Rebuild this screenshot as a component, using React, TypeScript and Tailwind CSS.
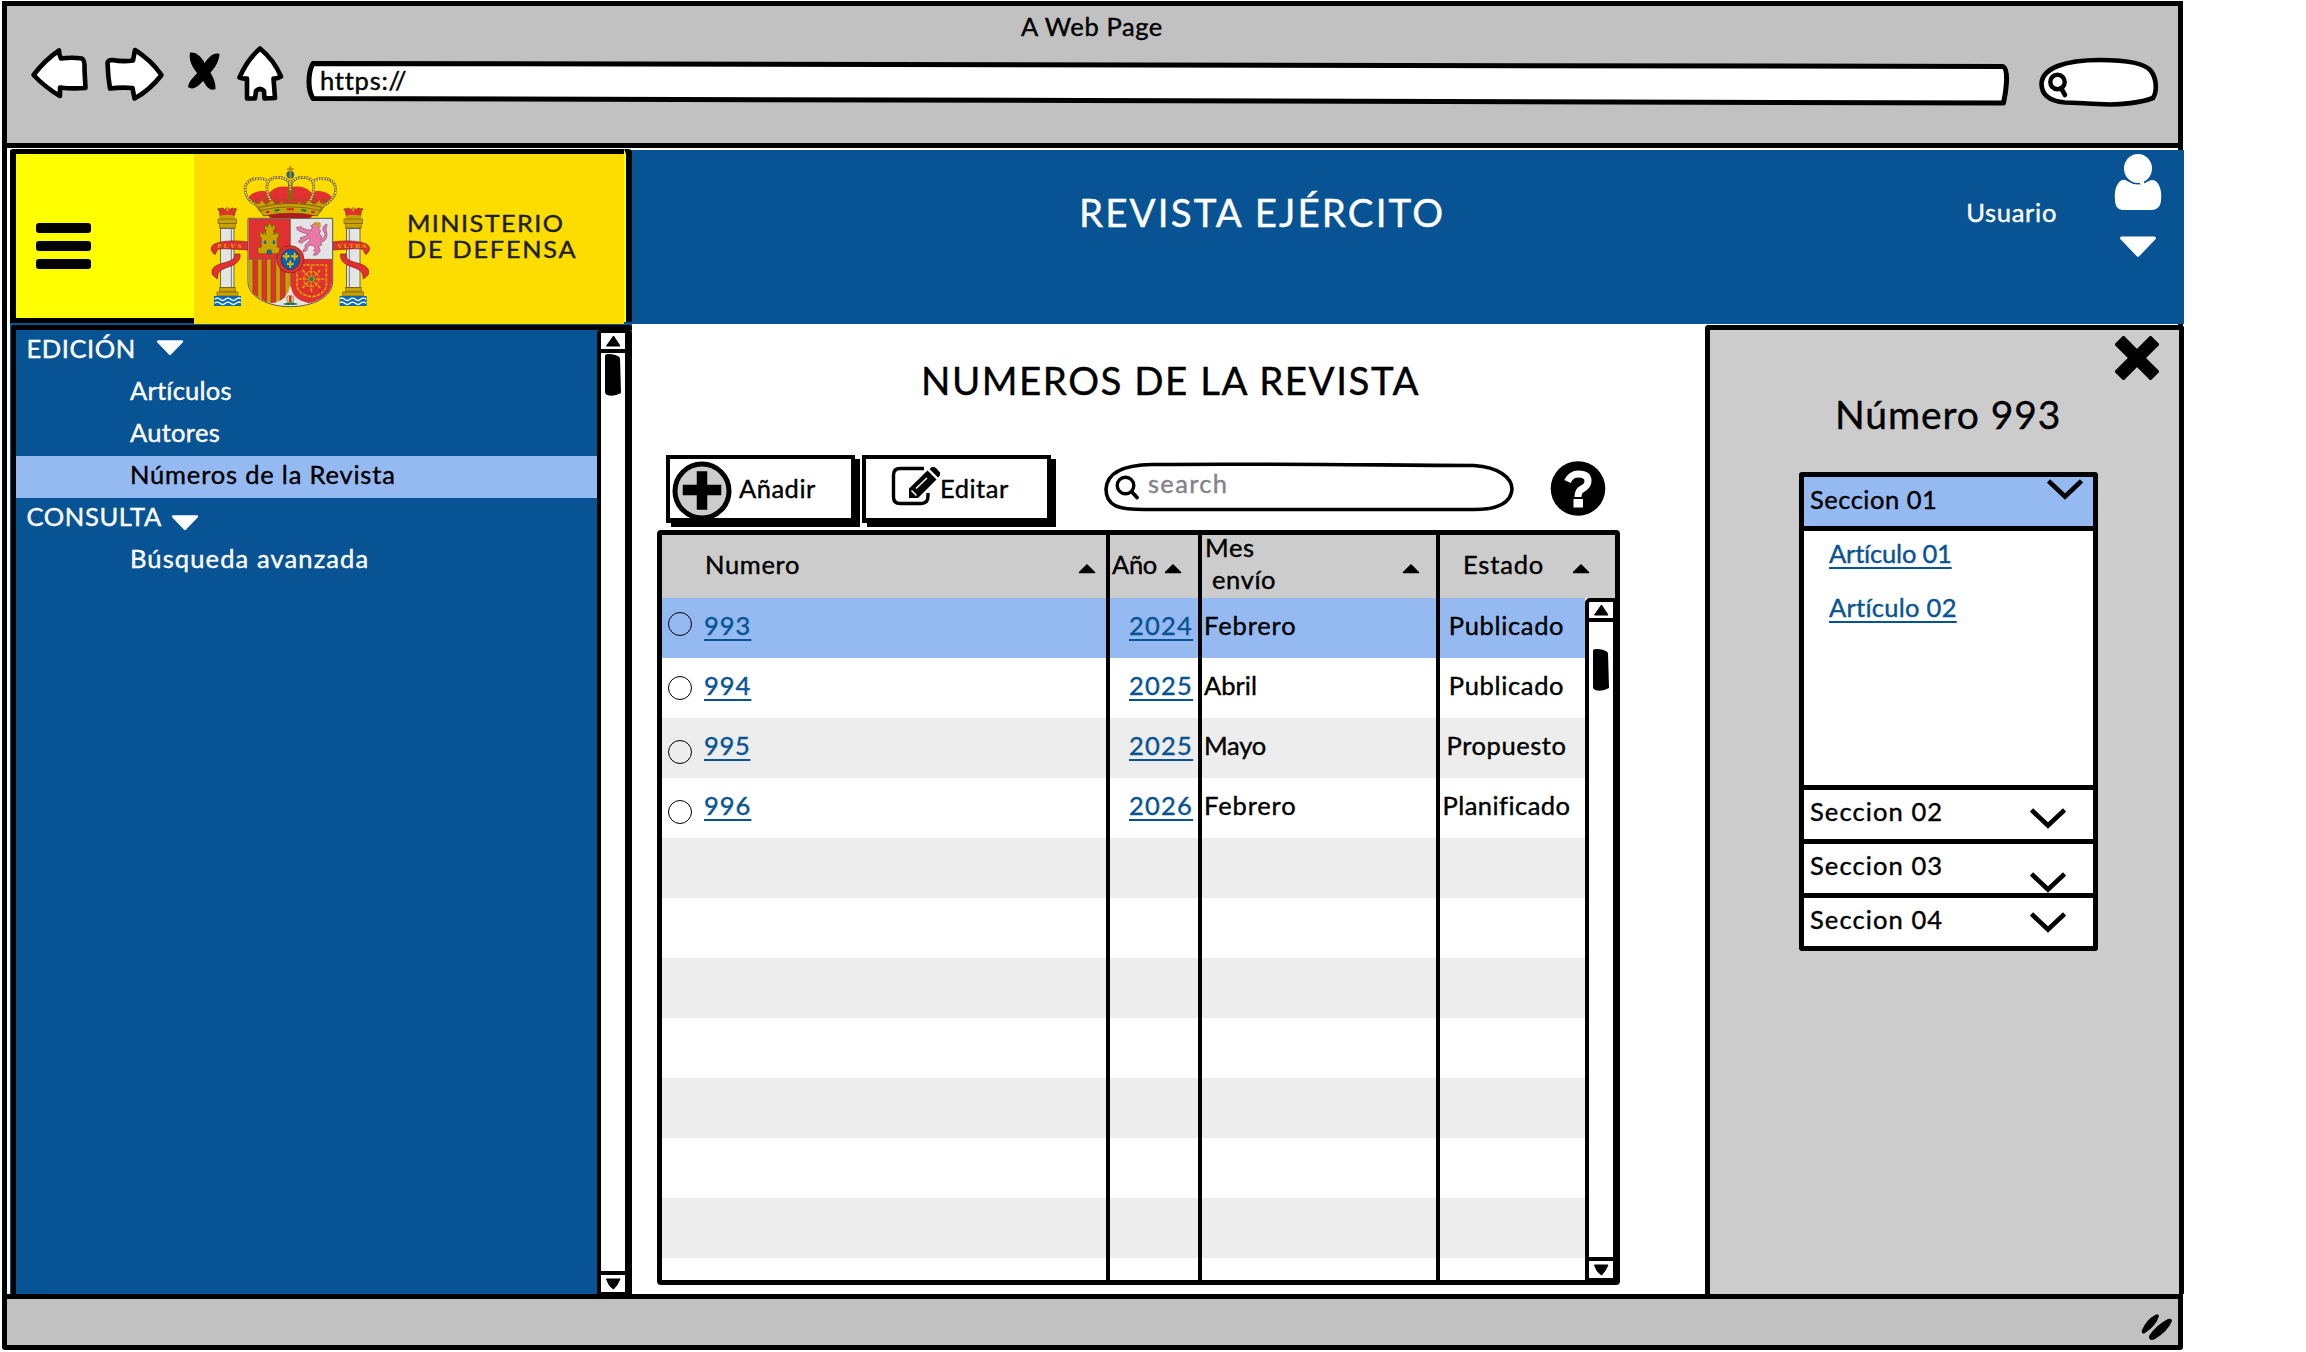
import { useLayoutEffect, useRef, useState } from "react";
import type { ReactNode } from "react";

/** Text run whose tracking is computed so that it spans a given width. */
function Txt({ w, className = "", children }: { w: number; className?: string; children: string }) {
  const ref = useRef<HTMLSpanElement>(null);
  const [tracking, setTracking] = useState<number | null>(null);
  useLayoutEffect(() => {
    if (ref.current && tracking === null) {
      setTracking((w - ref.current.offsetWidth) / children.length);
    }
  }, [w, children, tracking]);
  return (
    <span
      ref={ref}
      className={`inline-block shrink-0 self-start whitespace-pre ${className}`}
      style={tracking === null ? undefined : { letterSpacing: `${tracking}px` }}
    >
      {children}
    </span>
  );
}

const link = "text-[#085394] underline decoration-2 underline-offset-[4px]";

function Icon({ w, h, box, className = "", children }: { w: number; h: number; box: string; className?: string; children: ReactNode }) {
  return (
    <svg width={w} height={h} viewBox={box} className={`block shrink-0 ${className}`} fill="none">
      {children}
    </svg>
  );
}

function CaretDown({ w = 28, h = 16, className = "" }: { w?: number; h?: number; className?: string }) {
  return (
    <Icon w={w} h={h} box="0 0 28 16" className={className}>
      <path d="M2 1.5H26L14 14Z" fill="white" stroke="white" strokeWidth="2.4" strokeLinejoin="round" />
    </Icon>
  );
}

function SortUp({ className = "" }: { className?: string }) {
  return (
    <Icon w={18} h={11} box="0 0 18 11" className={className}>
      <path d="M1.5 9.5L9 2L16.5 9.5Z" fill="black" stroke="black" strokeWidth="1.6" strokeLinejoin="round" />
    </Icon>
  );
}

function Chevron({ className }: { className: string }) {
  return (
    <Icon w={36} h={21} box="0 0 36 21" className={className}>
      <path d="M1.5 2L18 17.5L34.5 2" stroke="black" strokeWidth="4.6" />
    </Icon>
  );
}

function NavIcons() {
  return (
    <Icon w={254} h={56} box="30 46 254 56" className="ml-[23px] mt-10">
      <g fill="white" stroke="black" strokeWidth="4.6" strokeLinejoin="round">
        <path d="M33.5 75Q45 60 59 50.5Q59 55 61 58.5Q72 57 82 58.5Q85 60 84.500 70L85.500 88Q72 89 60 87.500L60 96Q46 88 33.500 75Z" />
        <path d="M107.500 63Q108 60 112 60Q123 62 133 60.500L135 50Q151 60 161.500 75Q150 90 134.500 98.500L132.500 88Q121 87 110 88.500Q108 77 107.500 63Z" />
        <path d="M260 48.500Q274 60 281 76.500Q277 79 273.500 78.500L275 98L264.500 98.500L264 91Q260 87 256 91L255 98.500H247L247 78.500Q242 79 239.500 77.500Q247 60 260 48.500Z" />
      </g>
      <path d="M190 52.500C198 52 203 58 207 68C212 74 216 82 215.500 89C210 92 205 86 202 78C195 72 188 62 190 52.500Z" fill="black" />
      <path d="M219.500 54C213 52 207 58 202 68C195 76 189 80 188 87C193 91 200 86 206 77C214 70 219 62 219.500 54Z" fill="black" />
    </Icon>
  );
}

function BrowserBar() {
  return (
    <div className="flex h-[142px] flex-col border-b-[5px] border-black bg-[#c1c1c1]">
      <div className="-mt-[2px] flex h-[45px] pl-[1014px] leading-[45px]">
        <Txt w={142}>A Web Page</Txt>
      </div>
      <div className="-mt-[43px] flex items-start">
        <NavIcons />
        <div className="relative ml-[22px] mt-[54px] h-[48px] w-[1705px]">
          <svg width="1705" height="48" viewBox="306 60 1705 48" className="absolute inset-0 block">
            <path
              d="M313 63.500C800 64 1300 64 2003 66.500Q2007 68 2006.500 82Q2006 92 2003.500 103C1400 103 900 98.500 313 98.500Q309 92 309 82Q309 70 313 63.500Z"
              fill="white"
              stroke="black"
              strokeWidth="5"
              strokeLinejoin="round"
            />
          </svg>
          <Txt w={87} className="relative ml-[14px] mt-[4px] leading-[32px]">https://</Txt>
        </div>
        <Icon w={124} h={52} box="2037 56 124 52" className="ml-[26px] mt-[50px]">
          <path
            d="M2041.500 84C2042 68 2065 60 2100 60C2125 60 2145 63 2151 71C2157 79 2157 92 2153 98C2140 103 2120 104.500 2110 104.500C2090 104 2076 102.500 2065 102.500C2050 101 2041.500 95 2041.500 84Z"
            fill="white"
            stroke="black"
            strokeWidth="4.600"
          />
          <circle cx="2057.500" cy="82" r="7.200" stroke="black" strokeWidth="4.400" />
          <path d="M2061 88L2065 95" stroke="black" strokeWidth="4.600" strokeLinecap="round" />
        </Icon>
      </div>
    </div>
  );
}

function Pillar() {
  return (
    <g>
      <path d="M88 183C80 178 82 174 90 176C96 172 102 176 104 179C108 172 116 172 119 179C124 173 130 174 133 176C142 175 142 179 136 184L132 204H91Z" fill="#e03030" stroke="#7a5a10" strokeWidth="2.500" />
      <path d="M88 198Q111 190 135 198V206H88ZM109 172H115V184H109Z" fill="#c8a200" />
      <rect x="84" y="207" width="56" height="13" fill="#c8a200" stroke="#705800" strokeWidth="2" />
      <rect x="88" y="220" width="48" height="14" fill="#c8a200" stroke="#705800" strokeWidth="2" />
      <rect x="92" y="235" width="40" height="178" fill="#e4e4e4" stroke="#333" strokeWidth="2" />
      <path d="M124 235V412" stroke="#777" strokeWidth="3" />
      <rect x="88" y="412" width="48" height="14" fill="#c8a200" stroke="#705800" strokeWidth="2" />
      <rect x="81" y="426" width="63" height="12" fill="#c8a200" stroke="#705800" strokeWidth="2" />
      <rect x="72" y="438" width="81" height="30" fill="#0a6ab6" />
      <path d="M74 448Q82 441 90 448T106 448T122 448T138 448T152 446M74 460Q82 453 90 460T106 460T122 460T138 460T152 458" stroke="white" strokeWidth="4" fill="none" />
      <path d="M174 276C135 270 90 272 70 284C60 293 62 303 75 314L83 298C100 294 140 298 174 300Z" fill="#e03030" stroke="#801818" strokeWidth="2" />
      <path d="M134 312H150C153 330 140 343 115 351C98 357 88 362 84 372L82 387L67 374C63 355 72 347 100 339C125 333 138 325 134 312Z" fill="#e03030" stroke="#801818" strokeWidth="2" />
    </g>
  );
}

function Fleur({ x, y }: { x: number; y: number }) {
  return (
    <path
      transform={`translate(${x} ${y})`}
      d="M0 -14L4 -7L2.500 -1C7 -8 13 -5 10 2C8 2 7 1 6 3H2L3 8L0 13L-3 8L-2 3H-6C-7 1 -8 2 -10 2C-13 -5 -7 -8 -2.500 -1L-4 -7Z"
      fill="#e0b800"
    />
  );
}

function CoatOfArms() {
  const petals = [0, 45, 90, 135, 180, 225, 270, 315];
  return (
    <svg width="162" height="144" viewBox="60 42 486 432" className="block shrink-0">
      <Pillar />
      <g transform="translate(602 0) scale(-1 1)">
        <Pillar />
      </g>
      <text x="82" y="295" fontSize="21" fontFamily="Liberation Serif" fontWeight="700" fill="#e0a800" textLength="72">PLVS</text>
      <text x="442" y="295" fontSize="21" fontFamily="Liberation Serif" fontWeight="700" fill="#e0a800" textLength="88">VLTRA</text>

      <path d="M174 205H428V395C428 440 370 470 301 470C232 470 174 440 174 395Z" fill="#e4e4e4" stroke="#555" strokeWidth="3" />
      <rect x="176" y="207" width="125" height="121" fill="#e03030" />
      <clipPath id="aragon">
        <path d="M176 328H301V400C298 436 278 454 246 460C200 448 176 425 176 395Z" />
      </clipPath>
      <g clipPath="url(#aragon)">
        <rect x="174" y="328" width="128" height="140" fill="#c8a200" />
        <path d="M196 328V470M223 328V470M250 328V470M278 328V470" stroke="#e03030" strokeWidth="14" />
        <path d="M189 328V470M203 328V470M216 328V470M230 328V470M243 328V470M257 328V470M271 328V470M285 328V470" stroke="#70300c" strokeWidth="1.500" />
      </g>
      <path d="M302 328H426V395C426 425 400 448 357 460C322 452 303 436 302 400Z" fill="#e03030" />
      <path d="M301 207V410M176 328H426" stroke="#6b4a20" strokeWidth="2" />

      <path d="M210 247H216V252H220V247H226V254H227V238H224V225H230V231H233V225H236V219H242V225H245V231H248V225H255V238H251V254H252V247H257V252H260V247H266V263H262V292H269V311H204V292H214V263H210Z" fill="#c8a200" stroke="#705800" strokeWidth="2" />
      <path d="M231 311V302Q238 295 245 302V311Z" fill="#0a6ab6" stroke="#333" strokeWidth="1" />
      <ellipse cx="225" cy="277" rx="4" ry="6" fill="#0a6ab6" />
      <ellipse cx="252" cy="277" rx="4" ry="6" fill="#0a6ab6" />

      <path
        d="M370 222L376 217L382 221L388 218L391 229L386 235L392 242L388 252L395 258L393 268C402 264 408 256 402 246C396 238 398 230 404 226L411 222L408 240C411 247 412 256 409 264C405 273 398 276 391 276L396 284L386 290L391 302L382 314L370 316L376 306L370 300L377 296L371 288L362 285L352 291L351 301L340 307L339 300L345 295V285L353 277L361 271L357 265L345 272L334 280L324 274L333 270L330 264L345 259L355 252L345 250L334 246L322 240L320 231L328 233L331 228L337 234L350 239L364 240L367 231L362 228Z"
        fill="#ea78a8"
        stroke="#70304c"
        strokeWidth="1.500"
      />
      <path d="M372 223L375 215L380 219L384 215L387 221L392 218L390 230Z" fill="#c8a200" />

      <g stroke="#d4a500" strokeWidth="5" fill="none" strokeDasharray="11 3">
        <path d="M321 345H409V405C409 422 390 438 364 440C338 438 321 422 321 405Z" />
        {petals.map((a) => (
          <path key={a} d="M364 387V349" transform={`rotate(${a} 364 387)`} />
        ))}
        <circle cx="364" cy="387" r="23" strokeWidth="3.500" />
      </g>
      <circle cx="364" cy="387" r="7" fill="#089050" />

      <path d="M278 462L301 455L325 462Q312 466 301 464Q290 466 278 462Z" fill="#087848" />
      <circle cx="301" cy="447" r="11" fill="#f0d890" stroke="#8a6a10" strokeWidth="2" />
      <path d="M301 438V456" stroke="#d02020" strokeWidth="7" />

      <ellipse cx="301" cy="328" rx="41" ry="41" fill="#e03030" stroke="#801818" strokeWidth="2" />
      <ellipse cx="301" cy="328" rx="28" ry="31" fill="#0a5fae" stroke="#333" strokeWidth="2" />
      <Fleur x={289} y={320} />
      <Fleur x={314} y={320} />
      <Fleur x={301} y={343} />

      <path d="M176 142C190 122 222 118 238 128C252 110 282 106 301 112C320 106 350 110 364 128C380 118 412 122 426 142L398 176H204Z" fill="#e03030" />
      <g fill="none" stroke="#8a6a10" strokeWidth="8">
        <path d="M205 170C150 140 155 88 200 86C220 84 232 92 236 98" />
        <path d="M397 170C452 140 447 88 402 86C382 84 370 92 366 98" />
        <path d="M244 158C215 100 238 82 262 82C280 82 292 88 298 98" />
        <path d="M358 158C387 100 364 82 340 82C322 82 310 88 304 98" />
        <path d="M301 90V150" strokeWidth="14" />
      </g>
      <g fill="none" stroke="#fff6c0" strokeWidth="4.500" strokeDasharray="4 4">
        <path d="M205 170C150 140 155 88 200 86C220 84 232 92 236 98" />
        <path d="M397 170C452 140 447 88 402 86C382 84 370 92 366 98" />
        <path d="M244 158C215 100 238 82 262 82C280 82 292 88 298 98" />
        <path d="M358 158C387 100 364 82 340 82C322 82 310 88 304 98" />
        <path d="M301 92V122" />
      </g>
      <path d="M188 150L200 160L214 150L228 163L246 150L262 164L282 150L301 164L320 150L340 164L356 150L374 163L388 150L402 160L414 150L392 186Q301 166 210 186Z" fill="#c8a200" stroke="#7a5a10" strokeWidth="2" />
      {[204, 230, 258, 284, 318, 344, 372, 398].map((x) => (
        <circle key={x} cx={x} cy={154} r="7" fill="#e03030" stroke="#7a5a10" strokeWidth="2" />
      ))}
      <path d="M206 172Q301 148 396 172L382 198Q301 182 220 198Z" fill="#c8a200" stroke="#6b4a10" strokeWidth="2.500" />
      <path d="M212 181Q301 160 390 181" stroke="#6b4a10" strokeWidth="2" fill="none" />
      <path d="M254 182L268 179M334 179L348 182" stroke="#087848" strokeWidth="6" />
      <path d="M290 178H312M228 187L238 185M364 185L374 187" stroke="#d02020" strokeWidth="6" />
      <path d="M232 196Q301 182 370 196L360 204H242Z" fill="#b01c1c" />
      <ellipse cx="301" cy="74" rx="11" ry="11" fill="#0a6ab6" stroke="#7a5a10" strokeWidth="2" />
      <path d="M298 48H304V55H311V60H304V84H298V60H291V55H298Z" fill="#b08a00" />
    </svg>
  );
}

function Header() {
  return (
    <header className="-mr-[6px] ml-[3px] mt-[2px] flex h-[174px] shrink-0 bg-[#085394] text-white">
      <div className="flex w-[622px] shrink-0 text-[#1d1d1b]">
        <div className="-mt-px mb-px w-[184px] shrink-0 rounded-tl-[4px] border-b-[5px] border-l-[6px] border-t-[5px] border-black bg-[#ffff00]">
          <div className="ml-[20px] mt-[69px] flex w-[55px] flex-col gap-[8.500px]">
            <div className="h-[9.500px] rounded-[3px] bg-black" />
            <div className="h-[9.500px] rounded-[3px] bg-black" />
            <div className="h-[9.500px] rounded-[3px] bg-black" />
          </div>
        </div>
        <div className="-mt-px flex w-[430px] shrink-0 border-t-[5px] border-black bg-[#fddd00]">
          <div className="ml-[16px] mt-[10px]">
            <CoatOfArms />
          </div>
          <div className="ml-[35px] mt-[57px] flex origin-left scale-x-[1.12] flex-col self-start text-[22.500px] leading-[26px]">
            <Txt w={141}>MINISTERIO</Txt>
            <Txt w={152}>DE DEFENSA</Txt>
          </div>
        </div>
        <div className="-mt-px mb-[2px] w-[8px] rounded-tr-[4px] border-l-2 border-t-[5px] border-black border-l-[#ffff00] bg-black" />
      </div>
      <div className="ml-[447px] mt-[41px] text-[38.500px] leading-[42px]">
        <Txt w={366}>REVISTA EJÉRCITO</Txt>
      </div>
      <div className="ml-[521px] mt-[46px] leading-[32px]">
        <Txt w={91}>Usuario</Txt>
      </div>
      <div className="ml-[57px] mt-[3px] flex flex-col items-center">
        <Icon w={48} h={57} box="2114 153 48 57">
          <path d="M2115 200C2114 190 2117 183 2121 180.500Q2125 179 2127 181Q2138 188 2149 181Q2152 179 2155.500 181C2160 184 2162 192 2161 201Q2160 209 2153 210H2122Q2115 209 2115 200Z" fill="white" />
          <ellipse cx="2138" cy="168.500" rx="15.500" ry="15.500" fill="#085394" />
          <ellipse cx="2138" cy="168.500" rx="14" ry="14.500" fill="white" />
          <path d="M2140 180H2144V184H2140Z" fill="white" />
        </Icon>
        <CaretDown w={38} h={22} className="mt-[26px]" />
      </div>
    </header>
  );
}

function ScrollBar({ gap, className }: { gap: string; className: string }) {
  return (
    <div className={`flex shrink-0 flex-col border-black bg-white ${className}`}>
      <div className="flex h-[20px] shrink-0 items-center justify-center border-b-4 border-black">
        <Icon w={16} h={12} box="0 0 16 12">
          <path d="M1.500 11L8.500 1L15 11Z" fill="black" stroke="black" strokeLinejoin="round" />
        </Icon>
      </div>
      <div className={`ml-[4px] w-[16px] ${gap}`}>
        <Icon w={16} h={42} box="0 0 16 42">
          <path d="M0 2Q0 0 3 0Q12 0 15 4L16 39Q9 43 2 41Q0 40 0 38Z" fill="black" />
        </Icon>
      </div>
      <div className="mt-auto flex h-[21px] shrink-0 items-center justify-center border-t-4 border-black">
        <Icon w={16} h={12} box="0 0 16 12">
          <path d="M1.500 1H15Q12 8 8.500 11Q4 9 1.500 1Z" fill="black" stroke="black" strokeLinejoin="round" />
        </Icon>
      </div>
    </div>
  );
}

const menu = [
  { label: "EDICIÓN", w: 109, group: true, caret: "ml-[20px] mt-[10px]" },
  { label: "Artículos", w: 102 },
  { label: "Autores", w: 90 },
  { label: "Números de la Revista", w: 266, active: true },
  { label: "CONSULTA", w: 135, group: true, caret: "ml-[9px] mt-[17px]" },
  { label: "Búsqueda avanzada", w: 239 },
];

function Sidebar() {
  return (
    <aside className="ml-[3px] flex w-[622px] shrink-0 bg-[#085394] pl-px pt-px">
      <div className="flex w-full rounded-t-[3px] border-l-[5px] border-t-[5px] border-black">
        <nav className="flex w-[581px] flex-col text-white">
          {menu.map((m) => (
            <div
              key={m.label}
              className={`flex h-[42px] leading-[37px] ${m.group ? "pl-[10.500px]" : "pl-[114px]"} ${m.active ? "bg-[#95baf2] text-black" : ""}`}
            >
              <Txt w={m.w}>{m.label}</Txt>
              {m.caret && <CaretDown className={m.caret} />}
            </div>
          ))}
        </nav>
        <ScrollBar className="w-[35px] rounded-t-[4px] border-b-[2px] border-l-4 border-r-[7px] border-t-[3px]" gap="pt-[1px]" />
      </div>
    </aside>
  );
}

const radioTop = ["mt-[14px]", "mt-[18px]", "mt-[22px]", "mt-[22px]"];
const issues = [
  { num: "993", nw: 47, year: "2024", month: "Febrero", mw: 93, state: "Publicado", sw: 115 },
  { num: "994", nw: 47, year: "2025", month: "Abril", mw: 53, state: "Publicado", sw: 115 },
  { num: "995", nw: 46, year: "2025", month: "Mayo", mw: 62, state: "Propuesto", sw: 120 },
  { num: "996", nw: 47, year: "2026", month: "Febrero", mw: 93, state: "Planificado", sw: 127 },
];
const rowFills = [
  "bg-[#95baf2]", "bg-white", "bg-[#ededed]", "bg-white", "bg-[#ededed]", "bg-white",
  "bg-[#ededed]", "bg-white", "bg-[#ededed]", "bg-white", "bg-[#ededed]", "bg-white",
];

function IssueTable() {
  return (
    <div className="flex h-[755px] w-[963px] flex-col rounded-[4px] border-[5px] border-black bg-white">
      <div className="flex h-[63px] shrink-0 bg-[#cccccc] leading-[56px]">
        <div className="flex w-[448px] border-r-4 border-black pl-[43px] pt-px">
          <Txt w={95}>Numero</Txt>
          <SortUp className="ml-[278px] mt-[27px]" />
        </div>
        <div className="flex w-[92px] border-r-4 border-black pl-[2px] pt-px">
          <Txt w={45}>Año</Txt>
          <SortUp className="ml-[7px] mt-[27px]" />
        </div>
        <div className="flex w-[238px] border-r-4 border-black pl-[3px]">
          <div className="-mt-[4px] flex w-[197px] flex-col leading-[32px]">
            <Txt w={50}>Mes</Txt>
            <Txt w={64} className="ml-[7px]">envío</Txt>
          </div>
          <SortUp className="mt-[28px]" />
        </div>
        <div className="flex pl-[23px] pt-px">
          <Txt w={81}>Estado</Txt>
          <SortUp className="ml-[28px] mt-[27px]" />
        </div>
      </div>
      <div className="-mr-[4px] flex min-h-0 flex-1">
        <div className="flex w-[923px] flex-col overflow-hidden">
          {rowFills.map((fill, i) => {
            const r = issues[i];
            return (
              <div key={i} className={`flex h-[60px] shrink-0 leading-[54.500px] ${fill}`}>
                <div className="flex w-[448px] border-r-4 border-black pl-[6px]">
                  {r && (
                    <>
                      <div className={`h-[24px] w-[24px] shrink-0 rounded-full border-[1.500px] border-black ${radioTop[i]}`} />
                      <Txt w={r.nw} className={`ml-[12px] ${link}`}>{r.num}</Txt>
                    </>
                  )}
                </div>
                <div className="w-[92px] border-r-4 border-black pl-[19px]">
                  {r && <Txt w={64} className={link}>{r.year}</Txt>}
                </div>
                <div className="w-[238px] border-r-4 border-black pl-[2px]">
                  {r && <Txt w={r.mw}>{r.month}</Txt>}
                </div>
                <div className="flex flex-1 justify-center pr-[12px]">
                  {r && <Txt w={r.sw}>{r.state}</Txt>}
                </div>
              </div>
            );
          })}
        </div>
        <ScrollBar className="w-[34px] rounded-t-[5px] border-b-[2px] border-l-[4px] border-r-[6px] border-t-4" gap="pt-[27px]" />
      </div>
    </div>
  );
}

function Button({ children }: { children: ReactNode }) {
  return (
    <button className="mr-[7px] flex h-[68px] w-[189px] shrink-0 border-[4.500px] border-b-[5px] border-black bg-white shadow-[5px_4px_0_#000]">
      {children}
    </button>
  );
}

function MainContent() {
  return (
    <main className="flex w-[1073px] shrink-0 flex-col bg-white pl-[25px]">
      <div className="h-[131px] shrink-0 pl-[264px] pt-[36px] text-[38.500px] leading-[40px]">
        <Txt w={499}>NUMEROS DE LA REVISTA</Txt>
      </div>
      <div className="flex h-[75px] shrink-0 pl-[9px]">
        <Button>
          <Icon w={60} h={60} box="0 0 60 60" className="ml-[2px] mt-[2px]">
            <circle cx="30" cy="30" r="27" fill="#cccccc" stroke="black" strokeWidth="5" />
            <path d="M30 15.500V43.500M16 29H44" stroke="black" strokeWidth="10.500" strokeLinecap="square" strokeLinejoin="round" />
          </Icon>
          <Txt w={77} className="ml-[7px] mt-[9px] leading-[40px]">Añadir</Txt>
        </Button>
        <Button>
          <Icon w={50} h={40} box="891 466 50 40" className="ml-[25px] mt-[7px]">
            <path d="M924 468.500H900Q893.500 468.500 893.500 475V497Q893.500 503.500 900 503.500H921Q928 503.500 928 496V493" stroke="black" strokeWidth="3.400" />
            <path d="M909 498V488.500L927.500 470.500L936.500 479.500L918 498Z" fill="black" />
            <path d="M929.500 469L932 467Q934.500 466.500 936 468L940 472.500Q940.500 474.500 939.500 476L938 477.500Z" fill="black" />
            <path d="M911.500 490.500L916.500 495.500M916 488.500L927 478" stroke="white" strokeWidth="1.500" />
          </Icon>
          <Txt w={69} className="-ml-px mt-[9px] leading-[40px]">Editar</Txt>
        </Button>
        <div className="relative ml-[46px] mt-[7px] h-[50px] w-[410px] shrink-0">
          <svg width="410" height="50" viewBox="0 0 410 50" className="absolute inset-0 block" fill="none">
            <path d="M48 2.500C160 1.500 260 3 370 3.500C395 5 408 16 408 27C407 42 392 47.500 370 47.500H44C14 48 2 44 2 27C3 10 20 3 48 2.500Z" fill="white" stroke="black" strokeWidth="3.600" />
            <circle cx="21.500" cy="23.500" r="8.300" stroke="black" strokeWidth="3.400" />
            <path d="M28 30L33 35.500" stroke="black" strokeWidth="3.800" strokeLinecap="round" />
          </svg>
          <Txt w={80} className="relative ml-[44px] leading-[43px] text-[#83838c]">search</Txt>
        </div>
        <Icon w={56} h={56} box="0 0 56 56" className="ml-[36px] mt-[6px]">
          <circle cx="28" cy="27.500" r="27.300" fill="black" />
          <path d="M17.500 20.500Q21 13 28.500 13Q38 13 38 20Q38 25 32 28Q28 30 28 36" stroke="white" strokeWidth="7" />
          <rect x="23.500" y="38" width="9.500" height="8.500" fill="white" />
        </Icon>
      </div>
      <IssueTable />
    </main>
  );
}

const closedSections = [
  { label: "Seccion 02", chevron: "ml-[87px] mt-[18px]" },
  { label: "Seccion 03", chevron: "ml-[87px] mt-[28px]" },
  { label: "Seccion 04", chevron: "ml-[87px] mt-[14px]" },
];

function DetailPanel() {
  return (
    <aside className="-mr-[6px] mt-px flex w-[479px] shrink-0 flex-col rounded-t-[4px] border-l-[5px] border-r-[5px] border-t-[5px] border-black bg-[#cccccc]">
      <Icon w={44} h={44} box="0 0 44 44" className="ml-[405px] mt-[6px]">
        <path d="M8.500 8.500L35.500 35.500M35.500 8.500L8.500 35.500" stroke="black" strokeWidth="13" strokeLinecap="square" strokeLinejoin="round" />
      </Icon>
      <div className="ml-[125px] mt-[14px] text-[39px] leading-[40px]">
        <Txt w={226}>Número 993</Txt>
      </div>
      <div className="ml-[89px] mt-[38px] flex w-[299px] flex-col rounded-[3px] border-[5px] border-black bg-white">
        <div className="flex h-[54px] items-start border-b-[5px] border-black bg-[#95baf2] pl-[6px]">
          <Txt w={127} className="leading-[44px]">Seccion 01</Txt>
          <Chevron className="ml-[110px] mt-[2px]" />
        </div>
        <div className="flex h-[254px] flex-col pl-[25px]">
          <Txt w={123} className={`leading-[44px] ${link}`}>Artículo 01</Txt>
          <Txt w={128} className={`mt-[10px] leading-[44px] ${link}`}>Artículo 02</Txt>
        </div>
        {closedSections.map((s, i) => (
          <div key={s.label} className={`flex items-start border-t-[5px] border-black pl-[6px] ${i === 2 ? "h-[53px]" : "h-[54px]"}`}>
            <Txt w={133} className="leading-[43px]">{s.label}</Txt>
            <Chevron className={s.chevron} />
          </div>
        ))}
      </div>
    </aside>
  );
}

export default function App() {
  return (
    <div className="h-[1352px] w-[2306px] overflow-hidden bg-white pl-[2px] pt-px font-['Lato',sans-serif] text-[25.500px] leading-none text-black [-webkit-text-stroke:0.4px_currentColor]">
      <div className="flex h-[1349px] w-[2181px] flex-col rounded-b-[3px] border-[5px] border-black bg-white">
        <BrowserBar />
        <Header />
        <div className="flex h-[970px] shrink-0">
          <Sidebar />
          <MainContent />
          <DetailPanel />
        </div>
        <footer className="flex h-[51px] shrink-0 justify-end border-t-[5px] border-black bg-[#c1c1c1]">
          <Icon w={34} h={30} box="2140 1312 34 30" className="mr-[4px] mt-[13px]">
            <path d="M2155 1315Q2158 1313 2159 1316Q2156 1326 2145 1333Q2141 1335 2142 1330Q2146 1320 2155 1315Z" fill="black" />
            <path d="M2168 1319Q2172 1318 2172 1321Q2168 1331 2155 1339Q2149 1342 2149 1336Q2156 1325 2168 1319Z" fill="black" />
          </Icon>
        </footer>
      </div>
    </div>
  );
}
